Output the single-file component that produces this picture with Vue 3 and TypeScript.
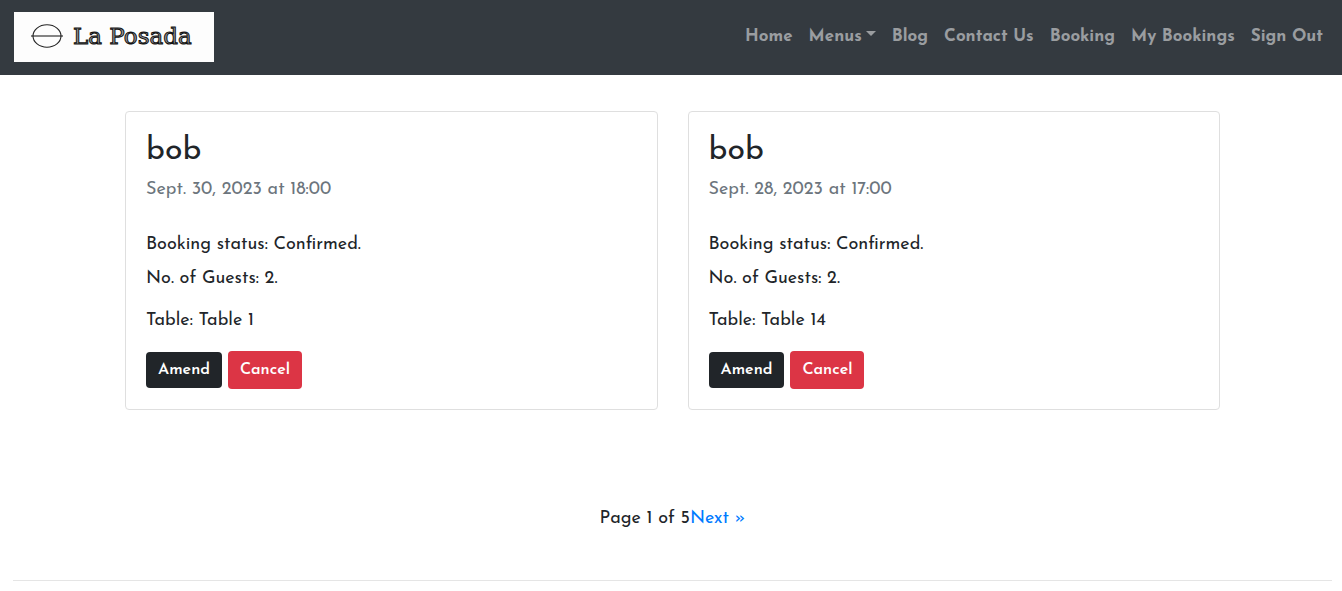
<script setup lang="ts">
interface NavLink {
  label: string
  dropdown?: boolean
}

interface Booking {
  id: number
  name: string
  date: string
  status: string
  guests: number
  table: string
}

const links: NavLink[] = [
  { label: 'Home' },
  { label: 'Menus', dropdown: true },
  { label: 'Blog' },
  { label: 'Contact Us' },
  { label: 'Booking' },
  { label: 'My Bookings' },
  { label: 'Sign Out' },
]

const bookings: Booking[] = [
  { id: 1, name: 'bob', date: 'Sept. 30, 2023 at 18:00', status: 'Confirmed', guests: 2, table: 'Table 1' },
  { id: 2, name: 'bob', date: 'Sept. 28, 2023 at 17:00', status: 'Confirmed', guests: 2, table: 'Table 14' },
]
</script>

<template>
  <header class="navbar">
    <a class="brand" href="#">
      <svg class="brand-mark" viewBox="0 0 34 26" aria-hidden="true">
        <ellipse cx="17" cy="13" rx="14" ry="11.2" />
        <path d="M1 13H33" />
      </svg>
      <span class="brand-name">La Posada</span>
    </a>
    <nav class="nav">
      <a v-for="link in links" :key="link.label" class="nav-link" :class="{ dropdown: link.dropdown }" href="#">{{ link.label }}</a>
    </nav>
  </header>

  <main class="page">
    <div class="cards">
      <article v-for="booking in bookings" :key="booking.id" class="card">
        <h2 class="card-title">{{ booking.name }}</h2>
        <h3 class="card-date">{{ booking.date }}</h3>
        <p class="status">Booking status: {{ booking.status }}.</p>
        <p class="guests">No. of Guests: {{ booking.guests }}.</p>
        <p class="table-name">Table: {{ booking.table }}</p>
        <div class="actions">
          <button type="button" class="btn amend">Amend</button>
          <button type="button" class="btn cancel">Cancel</button>
        </div>
      </article>
    </div>
    <div class="pagination">
      <span>Page 1 of 5</span><a href="#">Next »</a>
    </div>
    <hr class="divider" />
  </main>
</template>

<style>
body {
  margin: 0;
  background: #fff;
}
</style>

<style scoped>
.navbar,
.page {
  font-family: "Josefin Sans", Lato, sans-serif;
  font-size: 18px;
  line-height: 26px;
  color: #212529;
}

.navbar {
  display: flex;
  align-items: center;
  justify-content: space-between;
  box-sizing: border-box;
  min-height: 75px;
  padding: 12px 11px 13px 14px;
  background: #343a40;
}

.brand {
  display: flex;
  align-items: center;
  gap: 9px;
  box-sizing: border-box;
  width: 200px;
  height: 50px;
  padding: 0 0 2px 16px;
  background: #fdfdfd;
  color: #111;
  text-decoration: none;
}

.brand-mark {
  width: 34px;
  height: 26px;
  fill: none;
  stroke: #222;
  stroke-width: 1.1;
}

.brand-name {
  font-family: "DejaVu Serif", serif;
  font-size: 23px;
  line-height: 28px;
  color: #999;
  -webkit-text-stroke: 1px #111;
  white-space: nowrap;
}

.nav {
  display: flex;
}

.nav-link {
  padding: 0 8px;
  font-size: 17px;
  font-weight: 700;
  color: #9a9da0;
  text-decoration: none;
  white-space: nowrap;
}

.dropdown::after {
  content: "";
  display: inline-block;
  margin-left: 4px;
  vertical-align: 5px;
  border: 5px solid transparent;
  border-top-color: currentColor;
  border-bottom: 0;
}

.page {
  padding: 36px 10px 10px 13px;
}

.cards {
  display: grid;
  grid-template-columns: 1fr 1fr;
  gap: 30px;
  max-width: 1095px;
  margin: 0 auto;
}

.card {
  padding: 20px;
  border: 1px solid #dfdfdf;
  border-radius: 4px;
}

.card-title,
.card-date,
.card p {
  margin: 0;
  font-weight: 400;
}

.card-title {
  font-size: 32px;
  line-height: 38px;
}

.card .card-date {
  margin: 7px 0 29px;
  font-size: 18px;
  color: #6c757d;
}

.card .status {
  margin-bottom: 8px;
}

.card .guests {
  margin-bottom: 16px;
}

.card .table-name {
  margin-bottom: 17px;
}

.actions {
  display: flex;
  align-items: center;
  gap: 6px;
}

.btn {
  padding: 6px 12px;
  border: 0;
  border-radius: 4px;
  font-family: inherit;
  font-size: 16px;
  font-weight: 600;
  line-height: 24px;
  color: #fff;
  cursor: pointer;
}

.amend {
  background: #212529;
}

.cancel {
  padding: 7px 12px;
  background: #dc3545;
}

.pagination {
  margin: 96px 0 48px;
  text-align: center;
}

.pagination a {
  color: #007bff;
  text-decoration: none;
}

.divider {
  margin: 0;
  border: 0;
  border-top: 1px solid #e5e5e5;
}
</style>
